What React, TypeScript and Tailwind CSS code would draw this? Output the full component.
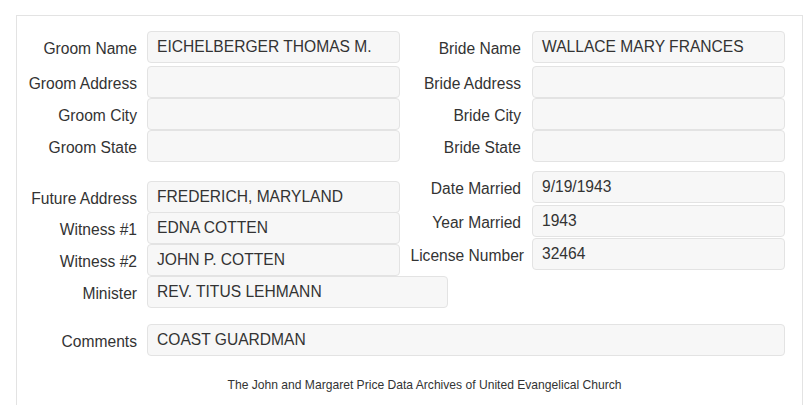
import React from 'react';

const font = { fontFamily: '"Liberation Sans", Arial, sans-serif' };

const Field = ({ value, w = 'w-[253px]' }: { value?: string; w?: string }) => (
  <div className={`${w} h-[32px] shrink-0 flex items-center pl-[9px] rounded-[4px] border border-[#e3e3e3] bg-[#f7f7f7] text-[#333] text-[15.6px] leading-none`}>
    {value}
  </div>
);

const Row = ({ label, value, lw, gap, mt, fw, lpad = 'pr-[3px]' }: { label: string; value?: string; lw: string; gap: string; mt: string; fw?: string; lpad?: string }) => (
  <div className={`flex items-center ${mt}`}>
    <div className={`${lw} shrink-0 text-right text-[#333] text-[15.6px] leading-none pt-[4px] whitespace-nowrap ${lpad}`}>{label}</div>
    <div className={`${gap} shrink-0`} />
    <Field value={value} w={fw} />
  </div>
);

export default function App() {
  return (
    <div className="bg-white w-[805px] h-[405px] overflow-hidden" style={font}>
      <div className="ml-4 mt-[15px] w-[787px] h-[420px] border border-[#e3e3e3] border-b-0 pt-[15px]">
        {/* top names */}
        <div className="flex">
          <div className="flex flex-col">
            <Row label="Groom Name" value="EICHELBERGER THOMAS M." lw="w-[123px]" gap="w-[7px]" mt="" />
            <Row label="Groom Address" lw="w-[123px]" gap="w-[7px]" mt="mt-[3px]" />
            <Row label="Groom City" lw="w-[123px]" gap="w-[7px]" mt="mt-0" />
            <Row label="Groom State" lw="w-[123px]" gap="w-[7px]" mt="mt-0" />
          </div>
          <div className="flex flex-col">
            <Row label="Bride Name" value="WALLACE MARY FRANCES" lw="w-[124px]" gap="w-[8px]" mt="" />
            <Row label="Bride Address" lw="w-[124px]" gap="w-[8px]" mt="mt-[3px]" />
            <Row label="Bride City" lw="w-[124px]" gap="w-[8px]" mt="mt-0" />
            <Row label="Bride State" lw="w-[124px]" gap="w-[8px]" mt="mt-0" />
          </div>
        </div>

        {/* details */}
        <div className="flex">
          <div className="flex flex-col w-[383px] pt-[19px]">
            <Row label="Future Address" value="FREDERICH, MARYLAND" lw="w-[123px]" gap="w-[7px]" mt="" />
            <Row label="Witness #1" value="EDNA COTTEN" lw="w-[123px]" gap="w-[7px]" mt="-mt-[1px]" />
            <Row label="Witness #2" value="JOHN P. COTTEN" lw="w-[123px]" gap="w-[7px]" mt="mt-0" />
            <Row label="Minister" value="REV. TITUS LEHMANN" lw="w-[123px]" gap="w-[7px]" mt="mt-0" fw="w-[301px]" />
          </div>
          <div className="flex flex-col pt-[9px]">
            <Row label="Date Married" value="9/19/1943" lw="w-[124px]" gap="w-[8px]" mt="" />
            <Row label="Year Married" value="1943" lw="w-[124px]" gap="w-[8px]" mt="mt-[2px]" />
            <Row label="License Number" value="32464" lw="w-[124px]" gap="w-[8px]" mt="mt-[1px]" lpad="pr-0" />
          </div>
        </div>

        {/* comments */}
        <Row label="Comments" value="COAST GUARDMAN" lw="w-[123px]" gap="w-[7px]" mt="mt-[16px]" fw="w-[638px]" />

        <div className="mt-[21px] pl-[30px] text-center text-[12.1px] leading-[17px] text-[#333]">
          The John and Margaret Price Data Archives of United Evangelical Church
        </div>
      </div>
    </div>
  );
}
